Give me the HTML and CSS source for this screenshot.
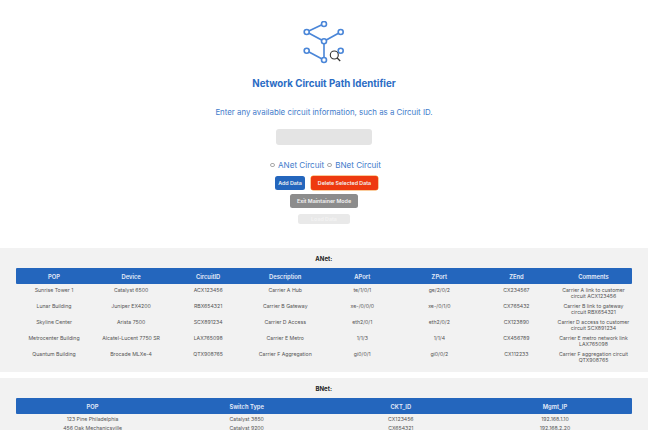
FILE: index.html
```html
<!DOCTYPE html>
<html lang="en">
<head>
<meta charset="utf-8">
<title>Network Circuit Path Identifier</title>
<link rel="stylesheet" href="styles.css">
</head>
<body>
<header class="hero">
  <svg class="logo" width="44" height="46" viewBox="0 0 44 46" fill="none">
    <g stroke="#4a86d8" stroke-width="1.6">
      <path d="M4.7 11 22 2.8M4.7 11 22 20.3 38.7 11M22 20.3V39M4.7 29.7 22 39"/>
      <g fill="#fff">
        <circle cx="22" cy="3" r="2.5"/>
        <circle cx="4.7" cy="11" r="2.5"/>
        <circle cx="38.7" cy="11" r="2.5"/>
        <circle cx="22" cy="20.3" r="2.5"/>
        <circle cx="4.7" cy="29.7" r="2.5"/>
        <circle cx="38.7" cy="29.7" r="2.5"/>
        <circle cx="22" cy="39" r="2.5"/>
      </g>
    </g>
    <circle cx="32.3" cy="34" r="4" fill="#fff" fill-opacity=".6" stroke="#333" stroke-width="1.1"/>
    <path d="M35.2 37 38.2 40" stroke="#333" stroke-width="1.3"/>
  </svg>
  <h1 class="title">Network Circuit Path Identifier</h1>
  <p class="lead">Enter any available circuit information, such as a Circuit ID.</p>
  <div class="search"></div>
  <div class="radios">
    <label class="radio"><span class="dot"></span>ANet Circuit</label>
    <label class="radio"><span class="dot"></span>BNet Circuit</label>
  </div>
  <div class="actions">
    <button class="btn btn-blue">Add Data</button>
    <button class="btn btn-red">Delete Selected Data</button>
  </div>
  <button class="btn btn-gray">Exit Maintainer Mode</button>
  <button class="btn btn-faint">Load Data</button>
</header>
<section class="panel panel-a">
  <h2 class="panel-title">ANet:</h2>
  <table class="grid">
    <thead><tr><th>POP</th><th>Device</th><th>CircuitID</th><th>Description</th><th>APort</th><th>ZPort</th><th>ZEnd</th><th>Comments</th></tr></thead>
    <tbody>
      <tr><td>Sunrise Tower 1</td><td>Catalyst 6500</td><td>ACX123456</td><td>Carrier A Hub</td><td>te/1/0/1</td><td>ge/2/0/2</td><td>CX234567</td><td>Carrier A link to customer circuit ACX123456</td></tr>
      <tr><td>Lunar Building</td><td>Juniper EX4200</td><td>RBX654321</td><td>Carrier B Gateway</td><td>xe-/0/0/0</td><td>xe-/0/1/0</td><td>CX765432</td><td>Carrier B link to gateway circuit RBX654321</td></tr>
      <tr><td>Skyline Center</td><td>Arista 7500</td><td>SCX891234</td><td>Carrier D Access</td><td>eth2/0/1</td><td>eth2/0/2</td><td>CX123890</td><td>Carrier D access to customer circuit SCX891234</td></tr>
      <tr><td>Metrocenter Building</td><td>Alcatel-Lucent 7750 SR</td><td>LAX765098</td><td>Carrier E Metro</td><td>1/1/3</td><td>1/1/4</td><td>CX456789</td><td>Carrier E metro network link LAX765098</td></tr>
      <tr><td>Quantum Building</td><td>Brocade MLXe-4</td><td>QTX908765</td><td>Carrier F Aggregation</td><td>gi0/0/1</td><td>gi0/0/2</td><td>CX112233</td><td>Carrier F aggregation circuit QTX908765</td></tr>
    </tbody>
  </table>
</section>
<section class="panel panel-b">
  <h2 class="panel-title">BNet:</h2>
  <table class="grid grid-b">
    <thead><tr><th>POP</th><th>Switch Type</th><th>CKT_ID</th><th>Mgmt_IP</th></tr></thead>
    <tbody>
      <tr><td>123 Pine Philadelphia</td><td>Catalyst 3850</td><td>CX123456</td><td>192.168.1.10</td></tr>
      <tr><td>456 Oak Mechanicsville</td><td>Catalyst 9200</td><td>CX654321</td><td>192.168.2.20</td></tr>
    </tbody>
  </table>
</section>
</body>
</html>
```
FILE: styles.css
```css
* { box-sizing: border-box; }
html, body { margin: 0; height: 430px; overflow: hidden; background: #fff; }
body { font-family: Inter, "Liberation Sans", sans-serif; padding-right: 2px; }
.hero { display: flex; flex-direction: column; align-items: center; padding-top: 21px; height: 248px; }
.logo { display: block; }
.title { margin: 10px 0 0; font-size: 9.7px; line-height: 14px; font-weight: 700; color: #2b6cc4; }
.lead { margin: 15px 0 0; font-size: 7.86px; line-height: 12px; color: #3f7ccb; }
.search { width: 96px; height: 16px; margin-top: 11px; background: #e4e4e4; border-radius: 3px; }
.radios { display: flex; gap: 3px; margin-top: 14px; margin-left: 3px; }
.radio { display: flex; align-items: center; font-size: 8.1px; line-height: 12px; color: #3f7ccb; }
.dot { width: 4.5px; height: 4.5px; margin-right: 3.5px; border: 0.6px solid #aaa; border-radius: 50%; }
.actions { display: flex; gap: 6px; margin-top: 5px; margin-left: 5px; }
.btn { display: block; padding: 0; border: 0; border-radius: 2.5px; font: 600 5.3px/14px Inter, "Liberation Sans", sans-serif; color: #f3f3f3; }
.btn-blue { width: 30px; background: #2466bd; }
.btn-red { width: 67px; background: #ee3a10; box-shadow: 0 0 0 0.5px #f59a3c; }
.btn-gray { width: 68px; margin-top: 4px; background: #8c8c8c; }
.btn-faint { width: 52px; height: 10px; margin-top: 6px; line-height: 10px; background: #e9e9e9; color: #f4f4f4; }
.panel { background: #f2f2f2; padding: 0 16px 0 15.5px; }
.panel-a { height: 124px; }
.panel-b { height: 52px; margin-top: 6px; }
.panel-title { margin: 0; padding-top: 7px; height: 20px; font-size: 6px; line-height: 8px; font-weight: 700; text-align: center; color: #222; }
.grid { width: 100%; border-collapse: collapse; table-layout: fixed; }
.grid th { height: 16px; padding: 0; background: #2466bd; color: #e8eefa; font-size: 5.8px; font-weight: 600; }
.grid th:first-child { border-radius: 1px 0 0 1px; }
.grid th:last-child { border-radius: 0 1px 1px 0; }
.grid td { height: 16px; padding: 2.5px 1px 0; vertical-align: top; text-align: center; font-size: 5.2px; line-height: 6.4px; color: #555; }
.grid-b td { height: 9.5px; padding: 1.5px 3px 0; }
```
